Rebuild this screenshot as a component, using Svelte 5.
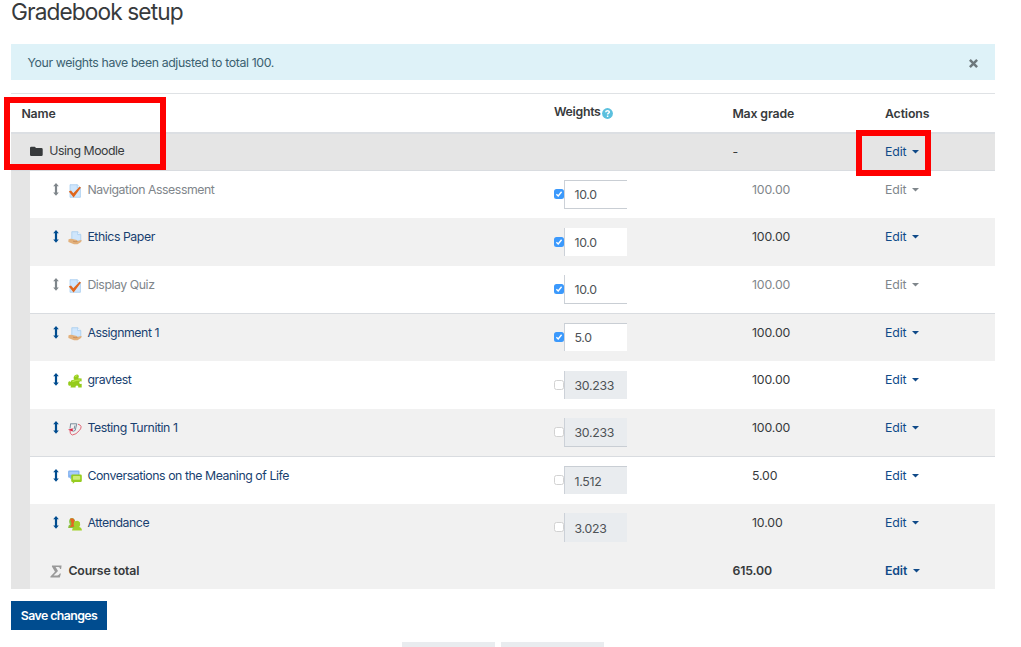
<script>
  const rows = [
    { name: 'Navigation Assessment', icon: 'quiz', weight: '10.0', on: true, max: '100.00', dim: true, top: true, bottom: true },
    { name: 'Ethics Paper', icon: 'assign', weight: '10.0', on: true, max: '100.00' },
    { name: 'Display Quiz', icon: 'quiz', weight: '10.0', on: true, max: '100.00', dim: true, bottom: true },
    { name: 'Assignment 1', icon: 'assign', weight: '5.0', on: true, max: '100.00', top: true, line: true },
    { name: 'gravtest', icon: 'puzzle', weight: '30.233', on: false, max: '100.00' },
    { name: 'Testing Turnitin 1', icon: 'turnitin', weight: '30.233', on: false, max: '100.00', bottom: true },
    { name: 'Conversations on the Meaning of Life', icon: 'forum', weight: '1.512', on: false, max: '5.00', top: true, line: true },
    { name: 'Attendance', icon: 'people', weight: '3.023', on: false, max: '10.00' }
  ];
</script>

{#snippet edit()}
  <span class="edit"><span class="t">Edit</span><svg class="caret" width="7" height="4" viewBox="0 0 7 4"><path d="M0 0H7L3.5 3.6Z" fill="currentColor" /></svg></span>
{/snippet}

<main>
  <h1><span class="t">Gradebook setup</span></h1>
  <div class="alert">
    <span class="t">Your weights have been adjusted to total 100.</span>
    <svg class="close" width="9" height="9" viewBox="0 0 9 9"><path d="M.9.9 8.1 8.1M8.1.9.9 8.1" stroke="#6d787c" stroke-width="2.5" /></svg>
  </div>

  <div class="table">
    <div class="row head">
      <div class="name"><span class="t">Name</span></div>
      <div class="weights">
        <span class="t">Weights</span>
        <svg width="11" height="11" viewBox="0 0 11 11"><circle cx="5.5" cy="5.5" r="5.4" fill="#5bc0de" /><path d="M3.7 4.2C3.8 2.2 7.4 2.2 7.3 4.2 7.3 5.3 5.6 5.2 5.6 6.6M5.6 7.6V8.9" fill="none" stroke="#fff" stroke-width="1.5" /></svg>
      </div>
      <div class="max"><span class="t">Max grade</span></div>
      <div class="actions"><span class="t">Actions</span></div>
    </div>

    <div class="row category">
      <div class="name">
        <svg width="13" height="11" viewBox="0 0 13 11"><path d="M0 2Q0 .7 1.3.7H4.5Q5.7.7 5.7 2H11.4Q12.7 2 12.7 3.3V8.8Q12.7 10.1 11.4 10.1H1.3Q0 10.1 0 8.8Z" fill="#373a3c" /></svg>
        <span class="t">Using Moodle</span>
      </div>
      <div class="weights"></div>
      <div class="max"><span class="t">-</span></div>
      <div class="actions">{@render edit()}</div>
    </div>

    <div class="items">
      {#each rows as r, i}
        <div class="item" class:alt={i % 2 === 1} class:dim={r.dim} class:line={r.line}>
          <div class="name">
            <svg class="move" width="6" height="13" viewBox="0 0 6 13"><path d="M3 0 5.8 3.2H4.1V9.6H5.8L3 12.8 .2 9.6H1.9V3.2H.2Z" fill="currentColor" /></svg>
            <svg class="icon" width="14" height="14" viewBox="0 0 14 14">
              {#if r.icon === 'quiz'}
                <path d="M2 .7H9.4L12.4 3.7V13.3H2Z" fill="#cfe6fc" stroke="#9fc8ee" stroke-width=".7" />
                <path d="M9.3.7V3.8H12.4" fill="#f3f9ff" stroke="#9fc8ee" stroke-width=".7" />
                <path d="M.8 7.4 3 6.4 5.3 9.3 11.5 2.7 13 3.6 5.6 13.4Z" fill="#df661d" />
              {:else if r.icon === 'assign'}
                <path d="M3.8.7H9.7L12.8 3.6V10H3.8Z" fill="#cfe6fc" stroke="#9fc8ee" stroke-width=".7" />
                <path d="M9.7.7V3.6H12.8" fill="#f3f9ff" stroke="#9fc8ee" stroke-width=".7" />
                <path d="M.4 8.5Q2.2 7.2 4.5 8L8.8 9.1Q10 9.8 8.8 10.3L13.2 9Q14.2 9.8 12.7 11.3L9.5 13.2H6L.4 10.9Z" fill="#e2b07b" />
                <path d="M5 10.2Q7 11.1 9.5 10.5" fill="none" stroke="#bd8452" stroke-width=".7" />
              {:else if r.icon === 'puzzle'}
                <path d="M.2 8.4Q1.2 6.6 2.8 7.9L3.1 6.4 6.4 5.6Q5.2 4.6 5.7 3 6.5.3 9 .4 11.4.8 10.7 3.2L10.1 4.3 13.6 4.6V7.4Q11.3 7 11.2 8.7 11.3 10.2 13.7 9.8V13.6H10.2Q10.8 11.6 9 11.5 7.1 11.6 7.6 13.6L2.5 13.4 3 11.5Q.6 12.5.2 10.6Z" fill="#95cb1c" />
                <path d="M4.4 7.6 8 6.4 12.3 5.8M7.3 2.7Q7.8 1.5 9.2 1.8" fill="none" stroke="#bde848" stroke-width="1.2" />
              {:else if r.icon === 'turnitin'}
                <path d="M2.2 1.8H8.8L7.2 8.4Q5.5 10 4 8.4M2.6 2 2 6.5M6.9 3.5 6 7.2" fill="none" stroke="#6d8293" stroke-width=".9" />
                <path d="M10 2.2Q15.3 3.6 11.6 8.3 8 12.8 4.3 13 1.6 12.3 2 8.5" fill="none" stroke="#df6574" stroke-width="1" />
                <path d="M0 7.8 4.8 6.2 4.6 9.5Z" fill="#df2947" />
              {:else if r.icon === 'forum'}
                <path d="M1.2.6H10.4Q11.5.6 11.5 1.7V7.8H4L2.3 9.4V7.8H1.2Q.1 7.8.1 6.7V1.7Q.1.6 1.2.6Z" fill="#84b3f0" />
                <rect x="1.4" y="1.8" width="8.8" height="3" fill="#a9cbfa" />
                <path d="M4.4 4.5H12.6Q13.8 4.5 13.8 5.7V10.8Q13.8 12 12.6 12H6.8L4.8 13.8V12H4.4Q3.2 12 3.2 10.8V5.7Q3.2 4.5 4.4 4.5Z" fill="#96cc20" />
                <rect x="4.9" y="6" width="7.3" height="3.8" rx=".7" fill="#cdec77" />
              {:else}
                <path d="M.2 10.4Q.3 8 2 7.4.2 4.1 2.2 1.6 5 .1 6.9 2.9 7.3 5.2 5.7 7L7.5 9V11H.2Z" fill="#84c43d" />
                <path d="M2 1.8Q5.4.3 6.6 3.5L5.6 6.9 6.8 9.6 1 10.3Q4.4 8 3.2 5.2Z" fill="#e66322" />
                <path d="M4 13.6Q4 10.8 6.4 10 4.8 6.7 7 4.3 10.2 2.6 11.9 5.3 12.7 8 11.3 9.9 13.9 10.5 13.9 13.6Z" fill="#a2d12b" />
              {/if}
            </svg>
            <span class="t">{r.name}</span>
          </div>
          <div class="weights">
            <span class="check" class:on={r.on}>
              {#if r.on}<svg width="10" height="10" viewBox="0 0 10 10"><path d="M2.4 5.2 4.2 7 7.6 2.7" fill="none" stroke="#fff" stroke-width="1.4" /></svg>{/if}
            </span>
            <span class="field" class:off={!r.on} class:top={r.top} class:bottom={r.bottom}><span class="t">{r.weight}</span></span>
          </div>
          <div class="max"><span class="t">{r.max}</span></div>
          <div class="actions">{@render edit()}</div>
        </div>
      {/each}
      <div class="item total">
        <div class="name">
          <svg width="12" height="13" viewBox="0 0 12 13"><path d="M2 .5H11.6L11.1 4H10.1Q10 2 8.3 2H5.6L8 6.1 3.5 10.4H7.4Q9.2 10.4 9.8 8.6H10.9L9.8 12.6H.4V11.6L5 6.7 1.9 1.4Z" fill="#999" /></svg>
          <span class="t">Course total</span>
        </div>
        <div class="weights"></div>
        <div class="max"><span class="t">615.00</span></div>
        <div class="actions">{@render edit()}</div>
      </div>
    </div>
    <div class="mark mark-name"></div>
    <div class="mark mark-edit"></div>
  </div>

  <button><span class="t">Save changes</span></button>
  <footer><div></div><div></div></footer>
</main>

<style>
  :global(body) { background: #fff; overflow: hidden; }
  main {
    box-sizing: border-box; width: 1021px; height: 647px; overflow: hidden;
    padding: 0 26px 0 11px; font: 12.3px/16px Inter, "Liberation Sans", sans-serif;
    color: #373a3c; letter-spacing: -0.13px; display: flex; flex-direction: column;
  }
  main > * { flex: none; }
  svg { display: block; flex: none; }
  h1 { margin: 0; height: 44px; font-size: 22.7px; line-height: 24px; font-weight: 400; letter-spacing: -0.9px; }
  .alert {
    height: 36px; box-sizing: border-box; padding: 2px 17px 0 16.5px; display: flex; align-items: center;
    justify-content: space-between; background: #def2f8; color: #3b6170; margin-bottom: 13px; letter-spacing: -0.37px;
  }
  .close { margin-top: 1px; }
  .table { position: relative; height: 495.6px; }
  .row, .item { display: grid; box-sizing: border-box; }
  .row { grid-template-columns: 543px 178.4px 152.6px 1fr; }
  .item { grid-template-columns: 524px 198px 133px 1fr; height: 47.6px; padding-top: 11px; background: #fff; }
  .row > div { display: flex; align-items: center; }
  .head { height: 39.4px; border-top: 1px solid #dfe2e5; font-weight: 600; padding-top: 1px; }
  .head .name { padding-left: 10.4px; }
  .head .weights { padding-bottom: 3px; gap: 1px; letter-spacing: -0.3px; }
  .head .weights svg { margin-top: 3px; }
  .category { height: 38.2px; background: #e5e5e5; border-top: 2px solid #dcdfe3; border-bottom: 1px solid #d9dce0; }
  .category .name { padding: 0 0 1px 19px; gap: 6.3px; letter-spacing: -0.45px; }
  .items { border-left: 19px solid #e5e5e5; }
  .item > div { display: flex; align-items: flex-start; }
  .item .name { padding-left: 23px; color: #183f70; letter-spacing: -0.44px; }
  .move { color: #004c8f; margin-top: 1px; }
  .icon { margin: 2px 5.4px 0 9px; }
  .alt, .total { background: #f1f1f1; }
  .line { box-shadow: inset 0 1px #d9dce0; }
  .line .name, .line .max, .line .actions, .total .name, .total .max, .total .actions { padding-top: 1px; }
  .dim .name, .dim .max, .dim .edit, .dim .move { color: #7f868b; }
  .edit { display: flex; align-items: center; color: #104a88; }
  .caret { margin-left: 6px; }
  .item .weights { margin-top: -1.4px; }
  .check {
    width: 10px; height: 10px; box-sizing: border-box; border: 1px solid #d2d2d2; border-radius: 2.5px;
    background: #fff; margin-top: 9px;
  }
  .check.on { border: 0; background: #3b99fc; }
  .field {
    width: 63px; height: 28.5px; box-sizing: border-box; display: flex; align-items: center;
    padding: 1px 0 0 9.4px; border-left: 1px solid #ccd1d8; background: #fff; color: #4d5256; letter-spacing: -0.25px;
  }
  .field.off { background: #e9ecef; padding-top: 2px; }
  .top { border-top: 1px solid #c9ced4; }
  .bottom { border-bottom: 1px solid #c9ced4; }
  .total { height: 37.4px; grid-template-columns: 524px 178.4px 152.6px 1fr; font-weight: 600; }
  .item.total .name { padding-left: 20px; gap: 6.4px; color: #373a3c; letter-spacing: -0.13px; }
  .total .name svg { margin-top: 2px; }
  .mark { position: absolute; box-sizing: border-box; border: 6px solid #f00; }
  .mark-name { left: -7px; top: 4px; width: 162px; height: 73px; }
  .mark-edit { left: 845px; top: 37px; width: 75px; height: 46px; }
  button {
    margin: 12.4px 0 0; width: 96px; height: 29px; padding: 1px 0 0; border: 0; background: #004c8f; color: #fff;
    font: inherit; font-weight: 600; letter-spacing: -0.55px;
  }
  footer { display: flex; gap: 6px; padding-left: 391px; margin-top: 12px; }
  footer div { width: 93px; height: 30px; background: #e9ecef; }
  footer div + div { width: 103px; }
</style>
